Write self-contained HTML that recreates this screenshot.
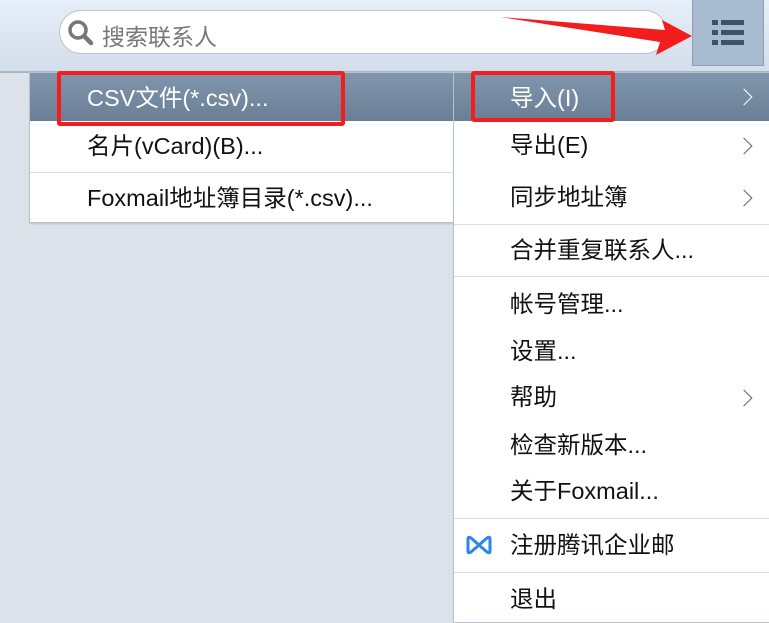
<!DOCTYPE html>
<html><head><meta charset="utf-8"><style>
body{margin:0;width:769px;height:623px;overflow:hidden;background:#dbe2ea;font-family:"Liberation Sans","Noto Sans CJK SC",sans-serif;position:relative}
.top{position:absolute;left:0;top:0;width:769px;height:71px;background:linear-gradient(#e6eef8,#d3deeb);border-bottom:2px solid #a9b6c4}
.search{position:absolute;left:59px;top:10px;width:606px;height:42px;border:1px solid #b8c3cf;border-radius:22px;background:#fff}
.search span{position:absolute;left:42px;top:7px;font-size:23px;color:#777}
.btn{position:absolute;left:692px;top:0;width:70px;height:65px;background:#a9bbd0;border:1px solid #8d9db0;border-top:none}
.menu{position:absolute;background:#fff;border:1px solid #b9c2cc;box-shadow:1px 1px 2px rgba(0,0,0,.15)}
.row{position:absolute;left:0;right:0;font-size:23.5px;color:#111;line-height:1}
.hl{background:linear-gradient(#8096ac,#6a7f96);color:#fff}
.div{position:absolute;left:0;right:0;height:1px;background:#dcdcdc}
.chev{position:absolute;right:24px;width:11px;height:11px;border-right:1.5px solid #666;border-top:1.5px solid #666;transform:rotate(45deg)}
.red{position:absolute;border:4px solid #f31d1d;border-radius:3px}
</style></head><body>
<div class="top"></div>
<div class="search">
<svg style="position:absolute;left:6px;top:7px" width="30" height="30" viewBox="0 0 30 30"><circle cx="12" cy="12" r="8" fill="none" stroke="#777" stroke-width="3.5"/><line x1="18" y1="18" x2="25" y2="25" stroke="#777" stroke-width="4.5" stroke-linecap="round"/></svg>
<span>搜索联系人</span></div>
<div class="btn"><svg style="position:absolute;left:17px;top:18px" width="38" height="30" viewBox="0 0 38 30"><g fill="#3d5269"><rect x="2" y="2" width="6" height="5"/><rect x="11" y="2" width="23" height="5"/><rect x="2" y="12" width="6" height="5"/><rect x="11" y="12" width="23" height="5"/><rect x="2" y="22" width="6" height="5"/><rect x="11" y="22" width="23" height="5"/></g></svg></div>
<svg style="position:absolute;left:0;top:0" width="769" height="70"><polygon points="500,17 665,30 662,20 692,36 656,55 660,42" fill="#f31d1d"/></svg>

<div class="menu" style="left:29px;top:72px;width:425px;height:149px">
<div class="row hl" style="top:0;height:48px"><span style="position:absolute;left:57px;top:14px">CSV文件(*.csv)...</span></div>
<div class="row" style="top:62px;left:57px">名片(vCard)(B)...</div>
<div class="div" style="top:99px"></div>
<div class="row" style="top:114px;left:57px">Foxmail地址簿目录(*.csv)...</div>
</div>

<div class="menu" style="left:453px;top:72px;width:320px;height:549px">
<div class="row hl" style="top:0;height:48px"><span style="position:absolute;left:56px;top:14px">导入(I)</span><div class="chev" style="top:18px;border-color:#fff"></div></div>
<div class="row" style="top:61px;left:56px">导出(E)</div><div class="chev" style="top:67px"></div>
<div class="row" style="top:113px;left:56px">同步地址簿</div><div class="chev" style="top:119px"></div>
<div class="div" style="top:151px"></div>
<div class="row" style="top:166px;left:56px">合并重复联系人...</div>
<div class="div" style="top:203px"></div>
<div class="row" style="top:220px;left:56px">帐号管理...</div>
<div class="row" style="top:267px;left:56px">设置...</div>
<div class="row" style="top:313px;left:56px">帮助</div><div class="chev" style="top:319px"></div>
<div class="row" style="top:361px;left:56px">检查新版本...</div>
<div class="row" style="top:407px;left:56px">关于Foxmail...</div>
<div class="div" style="top:445px"></div>
<svg style="position:absolute;left:10px;top:461px" width="30" height="22" viewBox="0 0 30 22"><path d="M4 5 Q4 2 7 4 L15 11 L23 4 Q26 2 26 5 V17 Q26 20 23 18 L15 11 L7 18 Q4 20 4 17 Z" fill="none" stroke="#2a86e8" stroke-width="3" stroke-linejoin="round"/></svg>
<div class="row" style="top:461px;left:56px">注册腾讯企业邮</div>
<div class="div" style="top:499px"></div>
<div class="row" style="top:515px;left:56px">退出</div>
</div>

<div class="red" style="left:57px;top:71px;width:280px;height:47px"></div>
<div class="red" style="left:471px;top:71px;width:136px;height:43px"></div>
</body></html>
